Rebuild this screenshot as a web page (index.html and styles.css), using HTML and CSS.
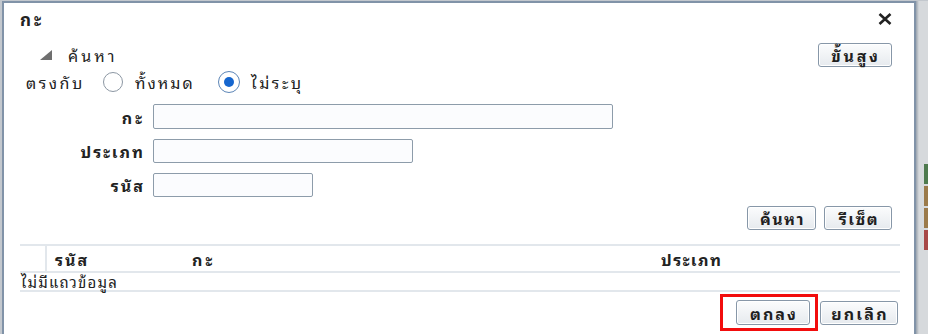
FILE: index.html
```html
<!DOCTYPE html>
<html lang="th">
<head>
    <meta charset="UTF-8">
    <meta name="viewport" content="width=device-width, initial-scale=1.0">
    <title>กะ</title>
    <link rel="stylesheet" href="styles.css">
</head>
<body>
    <div class="screen">
        <div class="dialog">
            <div class="dlgTitle">
                <h3>กะ</h3>
                <svg class="close" width="14" height="12" viewBox="0 0 14 12">
                    <path d="M1.5 1 L12.5 11 M12.5 1 L1.5 11" stroke="#222" stroke-width="2.6" />
                </svg>
            </div>

            <div class="searchHead">
                <div class="toggle">
                    <svg width="12" height="10" viewBox="0 0 12 10"><polygon points="0,10 12,10 12,0" fill="#6f6f6f" /></svg>
                    <span>ค้นหา</span>
                </div>
                <button class="btn adv">ขั้นสูง</button>
            </div>

            <div class="match">
                <span class="mLabel">ตรงกับ</span>
                <span class="radio"></span>
                <span class="radioText t1">ทั้งหมด</span>
                <span class="radio on"></span>
                <span class="radioText">ไม่ระบุ</span>
            </div>

            <div class="form">
                <div class="row r1">
                    <label>กะ</label>
                    <div class="input w460"></div>
                </div>
                <div class="row">
                    <label>ประเภท</label>
                    <div class="input w260"></div>
                </div>
                <div class="row">
                    <label>รนัส</label>
                    <div class="input w160"></div>
                </div>
            </div>

            <div class="searchBtns">
                <button class="btn find">ค้นหา</button>
                <button class="btn reset">รีเซ็ต</button>
            </div>

            <div class="table">
                <div class="thead">
                    <div class="cell sel"></div>
                    <div class="cell c1">รนัส</div>
                    <div class="cell c2">กะ</div>
                    <div class="cell c3">ประเภท</div>
                </div>
                <div class="empty">ไม่มีแถวข้อมูล</div>
            </div>

            <div class="footer">
                <div class="mark">
                    <button class="btn ok">ตกลง</button>
                </div>
                <button class="btn cancel">ยกเลิก</button>
            </div>
        </div>
        <div class="side">
            <i class="g"></i><i class="b"></i><i class="b"></i><i class="r"></i>
        </div>
    </div>
</body>
</html>
```

FILE: styles.css
```css
* {margin: 0; padding: 0; box-sizing: border-box;}
body {background: #c3c8ce; font-family: "Noto Sans Thai Looped", Tahoma, "Noto Sans", sans-serif; font-size: 16px; line-height: 20px; color: #222;}

.screen {display: flex; height: 334px; overflow: hidden; padding: 1px 0 0 2px;}
.dialog {width: 914px; height: 345px; background: #fff; border: 2px solid #8193a8; border-bottom: none; padding: 0 22px 0 16px; flex-shrink: 0;}
.side {flex: 1; background: linear-gradient(to right, #9aa3ad 0, #d6d9dc 3px, #d6d9dc 100%); display: flex; flex-direction: column; align-items: flex-end; padding-top: 163px;}
.side i {display: block; width: 4px; height: 20px; margin-bottom: 2px;}
.side .g {background: #4e7a4e;}
.side .b {background: #9b7a4a;}
.side .r {background: #a84848;}

/* title bar */
.dlgTitle {height: 32px; display: flex; align-items: center; justify-content: space-between;}
.dlgTitle h3 {font-size: 17px; font-weight: bold; letter-spacing: 3px;}

/* search header */
.searchHead {display: flex; justify-content: space-between; align-items: center; margin-top: 8px; height: 24px;}
.toggle {display: flex; align-items: center; padding-left: 20px;}
.toggle svg {margin-right: 16px;}
.toggle span {letter-spacing: 3px;}

.btn {font-family: inherit; font-size: 16px; line-height: 20px; font-weight: bold; color: #1f1f1f; height: 24px; padding: 0 0 0 2px; border: 1px solid #8797a8; border-radius: 3px; background: linear-gradient(#fbfcfd, #e6eaee); box-shadow: inset 0 0 0 1px #fff; letter-spacing: 2px;}
.btn.adv {width: 74px; letter-spacing: 2.7px;}
.btn.find {width: 69px; letter-spacing: 1.5px;}
.btn.reset {width: 68px; letter-spacing: 1.5px;}

/* match radios */
.match {display: flex; align-items: center; height: 22px; margin-top: 4px; padding-left: 6px;}
.match span {letter-spacing: 2.5px;}
.mLabel {width: 77px;}
.radio {width: 20px; height: 20px; border: 1.5px solid #8c97a3; border-radius: 50%; margin-right: 12px; background: #fff; position: relative; flex-shrink: 0;}
.radio.on {width: 22px; height: 22px; border-color: #5d86b7; margin-right: 11px;}
.radio.on::after {content: ""; position: absolute; left: 4.5px; top: 4.5px; width: 10px; height: 10px; border-radius: 50%; background: #1566cf;}
.radioText.t1 {width: 83px; letter-spacing: 2px;}

/* form */
.form {margin-top: 11px;}
.row {display: flex; align-items: center; height: 24px; margin-top: 10px;}
.row.r1 {height: 25px; margin-top: 0;}
.row label {width: 125px; text-align: right; margin-right: 8px; font-weight: bold; letter-spacing: 2px;}
.r1 label {letter-spacing: 3px;}
.input {height: 24px; border: 1.5px solid #8d9caa; border-radius: 2px; background: #fbfcfe;}
.r1 .input {height: 25px;}
.w460 {width: 460px;}
.w260 {width: 260px;}
.w160 {width: 160px;}

.searchBtns {display: flex; justify-content: flex-end; gap: 8px; margin-top: 9px;}

/* results table */
.table {margin-top: 14px; margin-right: -8px;}
.thead {display: flex; height: 29px; border-top: 2px solid #e2e7ec; border-bottom: 2px solid #e2e7ec;}
.cell {display: flex; align-items: center; font-weight: bold; letter-spacing: 2px;}
.sel {width: 27px; border-right: 2px solid #e2e7ec;}
.c1 {width: 134px; padding-left: 8px;}
.c2 {width: 469px; padding-left: 11px; letter-spacing: 3px;}
.c3 {flex: 1; padding-left: 11px; letter-spacing: 1.5px;}
.empty {height: 19px; line-height: 17px; font-size: 15px; padding-left: 1px; border-bottom: 2px solid #e2e7ec; letter-spacing: 1.2px;}

.footer {display: flex; justify-content: flex-end; align-items: center; margin-top: 2px; margin-right: -6px;}
.mark {border: 3px solid #f20d0d; padding: 3px 5px 3px 13px; margin-right: 2px;}
.btn.ok {width: 74px; height: 25px;}
.btn.cancel {width: 78px; height: 24px; margin-top: 1px; letter-spacing: 2.2px;}
```
